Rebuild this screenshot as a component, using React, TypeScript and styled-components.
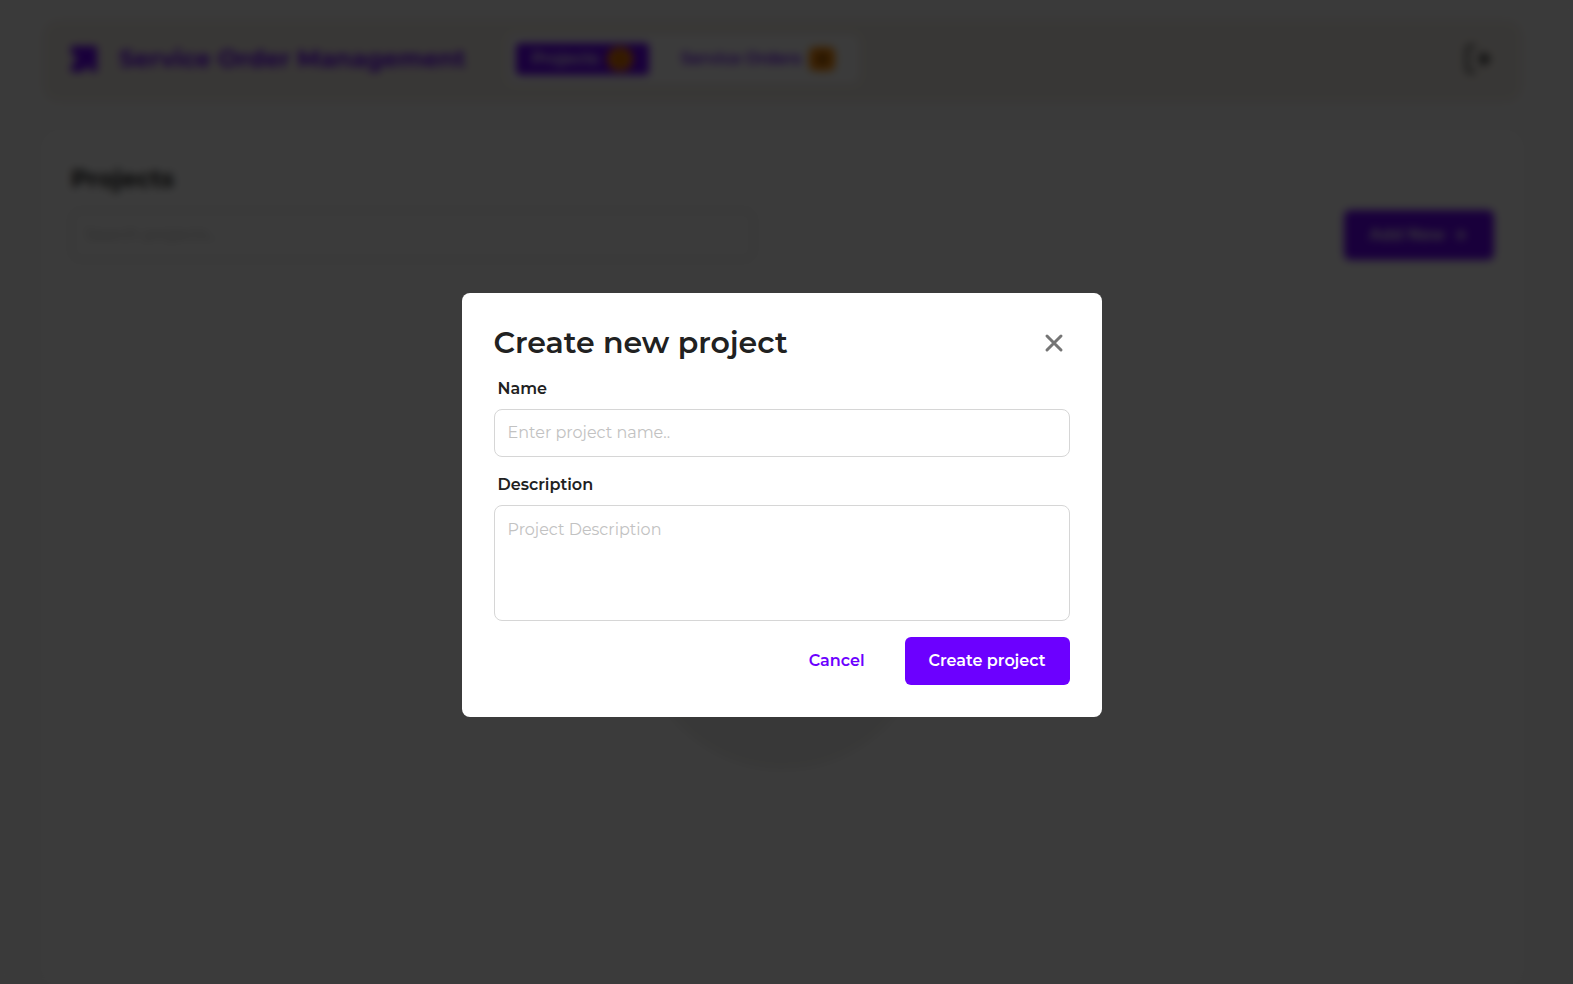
import React from "react";
import styled, { createGlobalStyle, css } from "styled-components";

const purple = "#6c00ff";
const ink = "#212121";

const GlobalStyle = createGlobalStyle`
  *, *::before, *::after { box-sizing: border-box; }
  body {
    margin: 0;
    background: #fafafa;
    color: ${ink};
    font-family: Montserrat, Inter, "Liberation Sans", sans-serif;
    font-size: 16px;
    line-height: 24px;
  }
  button, input, textarea { font: inherit; }
  h1, h2, p { margin: 0; }
`;

const Page = styled.div`
  min-height: 100vh;
  display: flex;
  flex-direction: column;
  gap: 30px;
  padding: 20px 51px 0 43px;
`;

const Header = styled.header`
  display: flex;
  align-items: center;
  gap: 24px;
  height: 82px;
  padding: 0 28px 4px;
  border-radius: 16px;
  background: #f3eee8;
`;

const Brand = styled.div`
  display: flex;
  align-items: center;
  gap: 22px;
  margin-right: 18px;
  color: ${purple};
`;

const BrandName = styled.h1`
  font-size: 24px;
  line-height: 32px;
  font-weight: 700;
`;

const Tabs = styled.nav`
  display: flex;
  gap: 16px;
  padding: 8px;
  border-radius: 8px;
  background: #ffffff;
`;

const Tab = styled.a<{ $active?: boolean }>`
  display: flex;
  align-items: center;
  gap: 8px;
  height: 32px;
  padding: 0 16px;
  border-radius: 4px;
  font-weight: 600;
  text-decoration: none;
  color: ${(p) => (p.$active ? "#ffffff" : purple)};
  background: ${(p) => (p.$active ? purple : "transparent")};
`;

const Badge = styled.span<{ $round?: boolean }>`
  display: grid;
  place-items: center;
  width: 26px;
  height: 24px;
  border-radius: ${(p) => (p.$round ? "12px" : "6px")};
  background: ${(p) => (p.$round ? "#f57c00" : "#ff8a00")};
  color: ${(p) => (p.$round ? "#b85c00" : ink)};
  font-size: 14px;
`;

const IconButton = styled.button`
  display: grid;
  place-items: center;
  width: 32px;
  height: 32px;
  padding: 0;
  border: 0;
  background: none;
  color: #757575;
`;

const SignOut = styled(IconButton)`
  margin-left: auto;
  color: #424242;
`;

const Panel = styled.main`
  flex: 1;
  display: flex;
  flex-direction: column;
  padding: 30px 28px;
  border-radius: 16px;
  background: #ffffff;
`;

const PanelTitle = styled.h2`
  font-size: 24px;
  line-height: 34px;
  font-weight: 700;
`;

const Toolbar = styled.div`
  display: flex;
  justify-content: space-between;
  margin-top: 14px;
`;

const field = css`
  display: block;
  width: 100%;
  border: 1px solid #d6d6d6;
  border-radius: 8px;
  background: #ffffff;
  color: ${ink};
  &::placeholder { color: #c2c2c2; opacity: 1; }
`;

const Input = styled.input`
  ${field}
  height: 48px;
  padding: 0 13px 2px;
`;

const Search = styled(Input)`
  width: 48%;
  height: 50px;
  border-color: #b2b2b2;
`;

const TextArea = styled.textarea`
  ${field}
  height: 116px;
  padding: 12px 13px;
  resize: none;
`;

const Button = styled.button<{ $plain?: boolean }>`
  display: flex;
  align-items: center;
  justify-content: center;
  gap: 8px;
  height: 48px;
  padding: 0 24px;
  border: 0;
  border-radius: 6px;
  font-weight: 600;
  color: ${(p) => (p.$plain ? purple : "#ffffff")};
  background: ${(p) => (p.$plain ? "transparent" : purple)};
`;

const AddButton = styled(Button)`
  height: 50px;
  padding: 0 25px;
`;

const EmptyState = styled.div`
  align-self: center;
  width: 290px;
  height: 290px;
  margin-top: 220px;
  border-radius: 50%;
  background: #f3f3f2;
`;

const Overlay = styled.div`
  position: fixed;
  inset: 0;
  display: flex;
  align-items: center;
  justify-content: center;
  padding: 26px 10px 0 0;
  background: rgba(0, 0, 0, 0.77);
  backdrop-filter: blur(4px);
`;

const Dialog = styled.form`
  width: 640px;
  max-width: 100%;
  padding: 32px;
  border-radius: 8px;
  background: #ffffff;
`;

const DialogHead = styled.div`
  display: flex;
  align-items: center;
  justify-content: space-between;
  height: 36px;
`;

const DialogTitle = styled.h2`
  font-size: 30px;
  line-height: 36px;
  font-weight: 600;
`;

const Label = styled.label`
  display: block;
  margin: 16px 0 8px;
  padding-left: 4px;
  font-weight: 600;
`;

const Actions = styled.div`
  display: flex;
  justify-content: flex-end;
  gap: 16px;
  margin-top: 16px;
`;

const Logo = () => (
  <svg width="26" height="26" viewBox="0 0 26 26" fill="currentColor" aria-hidden="true">
    <path d="M0 0h26v26h-6l-2-7-7 7H0v-6l7-8-7-4z" />
  </svg>
);

const SignOutIcon = () => (
  <svg width="32" height="32" viewBox="0 0 32 32" fill="none" stroke="currentColor" strokeWidth="3" aria-hidden="true">
    <path d="M13 3H9a4 4 0 0 0-4 4v18a4 4 0 0 0 4 4h4M15 16h10" />
    <path d="M21 11l6 5-6 5z" fill="currentColor" />
  </svg>
);

const PlusIcon = () => (
  <svg width="16" height="16" viewBox="0 0 16 16" fill="none" stroke="currentColor" strokeWidth="2" aria-hidden="true">
    <path d="M8 2v12M2 8h12" />
  </svg>
);

const CloseIcon = () => (
  <svg width="32" height="32" viewBox="0 0 32 32" fill="none" stroke="currentColor" strokeWidth="3" strokeLinecap="round" aria-hidden="true">
    <path d="M9 9l14 14M23 9l-14 14" />
  </svg>
);

export default function App() {
  return (
    <>
      <GlobalStyle />
      <Page>
        <Header>
          <Brand>
            <Logo />
            <BrandName>Service Order Management</BrandName>
          </Brand>
          <Tabs>
            <Tab href="#projects" $active>Projects <Badge $round>0</Badge></Tab>
            <Tab href="#orders">Service Orders <Badge>0</Badge></Tab>
          </Tabs>
          <SignOut type="button" aria-label="Sign out"><SignOutIcon /></SignOut>
        </Header>
        <Panel>
          <PanelTitle>Projects</PanelTitle>
          <Toolbar>
            <Search type="search" aria-label="Search projects" placeholder="Search projects..." />
            <AddButton type="button">Add New <PlusIcon /></AddButton>
          </Toolbar>
          <EmptyState />
        </Panel>
      </Page>
      <Overlay>
        <Dialog role="dialog" aria-modal="true" aria-labelledby="dialog-title">
          <DialogHead>
            <DialogTitle id="dialog-title">Create new project</DialogTitle>
            <IconButton type="button" aria-label="Close"><CloseIcon /></IconButton>
          </DialogHead>
          <Label htmlFor="name">Name</Label>
          <Input id="name" placeholder="Enter project name.." />
          <Label htmlFor="description">Description</Label>
          <TextArea id="description" placeholder="Project Description" />
          <Actions>
            <Button type="button" $plain>Cancel</Button>
            <Button type="submit">Create project</Button>
          </Actions>
        </Dialog>
      </Overlay>
    </>
  );
}
